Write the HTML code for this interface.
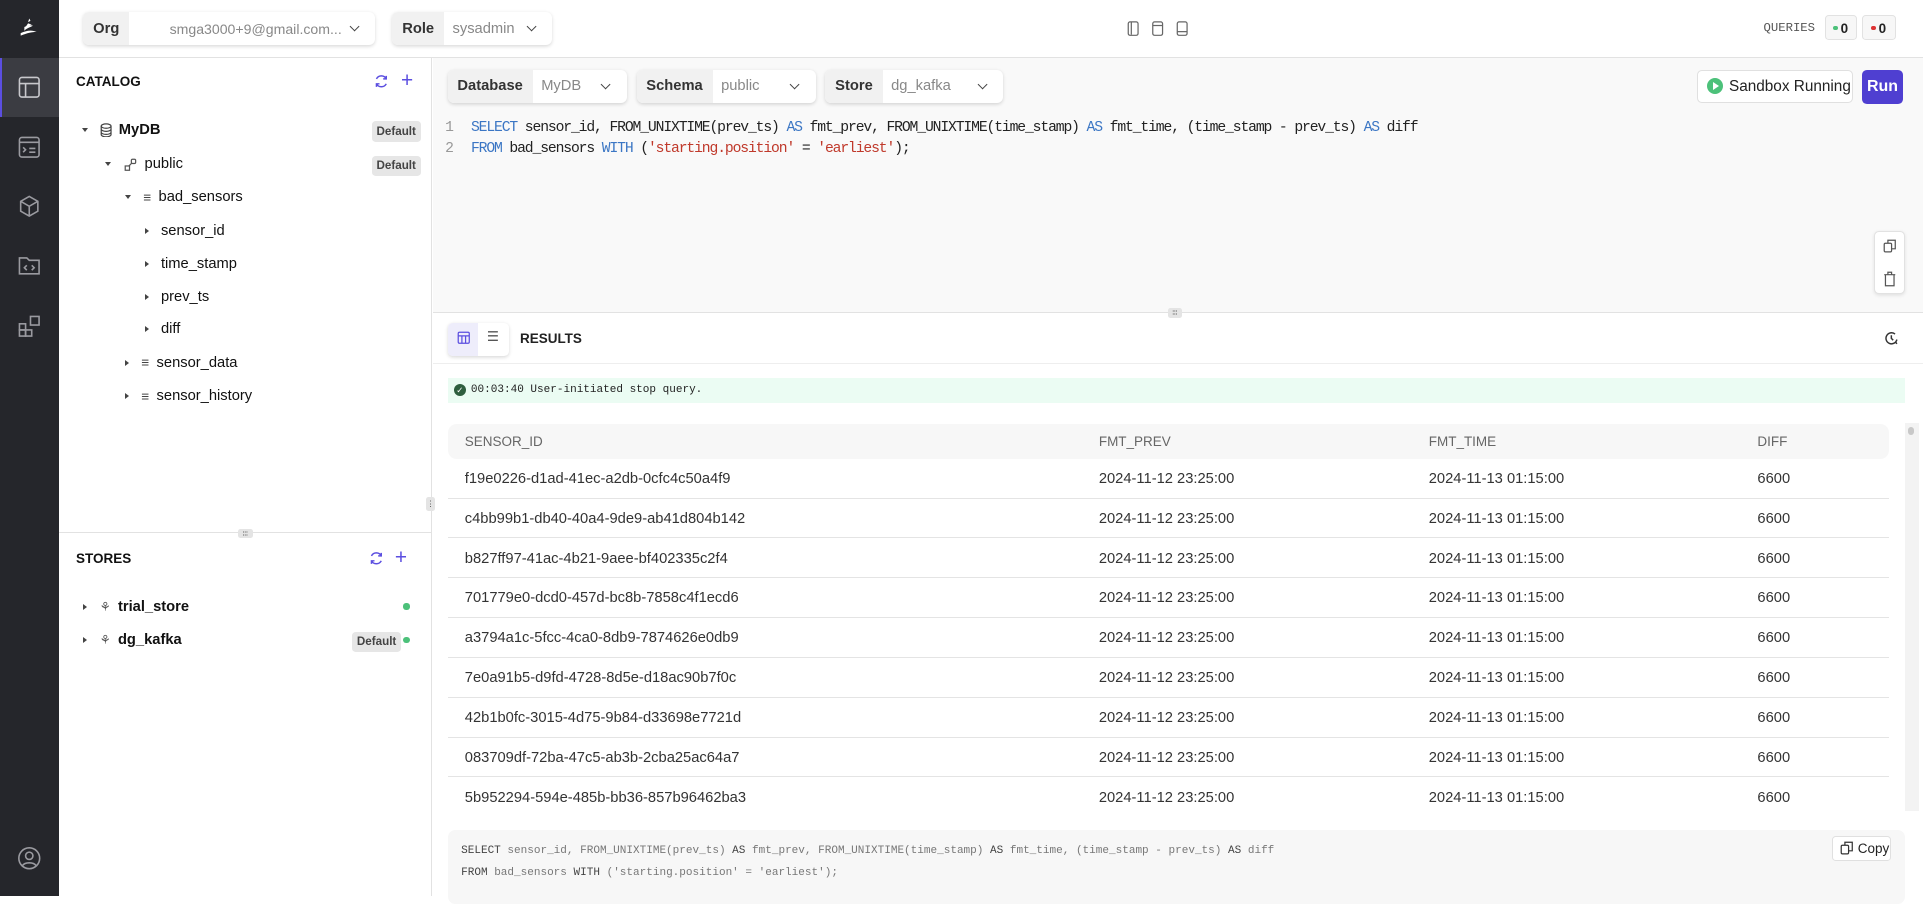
<!DOCTYPE html>
<html><head><meta charset="utf-8">
<style>
html{zoom:1.22640}
*{box-sizing:border-box;margin:0;padding:0}
body{width:1568px;height:731px;overflow:hidden;font-family:"Liberation Sans",sans-serif;font-size:12px;color:#222;background:#fff;position:relative}
.abs{position:absolute}
.mono{font-family:"Liberation Mono",monospace}
.side{left:0;top:0;width:48px;height:731px;background:#25262b}
.side svg{position:absolute;left:14px}
.top{left:48px;top:0;right:0;height:47px;border-bottom:1px solid #e2e2e2;background:#fff}
.sel{position:absolute;height:27px;border-radius:5px;box-shadow:0 1px 3px rgba(0,0,0,.15);display:flex;background:#fff;overflow:hidden}
.sel .l{background:#f1f1f1;padding:0 8px;display:flex;align-items:center;font-weight:bold;color:#333;font-size:12px}
.sel .v{flex:1;display:flex;align-items:center;padding-left:7px;color:#888;font-size:12px;position:relative}
.sel .v:after{content:"";position:absolute;right:14px;top:9px;width:5px;height:5px;border-right:1.2px solid #444;border-bottom:1.2px solid #444;transform:rotate(45deg)}
.left{left:48px;top:47px;width:304px;height:684px;border-right:1px solid #e2e2e2;background:#fff}
.hdr{font-weight:bold;font-size:11px;color:#111}
.row{position:absolute;font-size:12px;color:#111;display:flex;align-items:center;height:16px}
.tri{width:0;height:0;border-left:3.5px solid #444;border-top:3px solid transparent;border-bottom:3px solid transparent;margin-right:10px}
.tri.d{border-top:3.5px solid #444;border-left:3px solid transparent;border-right:3px solid transparent;border-bottom:0}
.badge{position:absolute;background:#e6e6e6;border-radius:3px;font-size:9.5px;font-weight:bold;color:#444;padding:3px 4px}
.handle{position:absolute;width:12px;height:8px;background:#e4e4e4;border-radius:2px;font-size:6px;line-height:8px;text-align:center;color:#444}
.kw{color:#3b76c4}.str{color:#c0392b}
.tbl{position:absolute;left:365px;width:1175px}
.tr{height:32.5px;border-bottom:1px solid #e4e4e4;position:relative;font-size:12px;color:#333}
.tr span{position:absolute;top:10px}
</style></head><body>

<div class="abs side">
  <svg style="top:13px" width="20" height="20" viewBox="0 0 20 20"><path d="M10 2l1 2-2 1zM6 9c2-1 5-2 7-1-2 1-5 2-7 4zM3 14c4-2 9-3 13-1-3 0-8 1-13 3z" fill="#fff"/><path d="M9 6c1 0 2 1 3 1l-5 2z" fill="#fff"/></svg>
  <div class="abs" style="left:0;top:47px;width:48px;height:48px;background:#3b3c42;border-left:2px solid #5b4ee0"></div>
  <svg style="top:61px" width="20" height="20" viewBox="0 0 20 20" fill="none" stroke="#c8c8cc" stroke-width="1.3"><rect x="2" y="2" width="16" height="16" rx="2"/><path d="M2 7h16M7 7v11"/></svg>
  <svg style="top:110px" width="20" height="20" viewBox="0 0 20 20" fill="none" stroke="#9a9aa0" stroke-width="1.3"><rect x="2" y="2" width="16" height="16" rx="2"/><path d="M2 6h16M5 10l2 2-2 2M10 11h5M10 14h5"/></svg>
  <svg style="top:158px" width="20" height="20" viewBox="0 0 20 20" fill="none" stroke="#9a9aa0" stroke-width="1.3"><path d="M10 2l7 4v8l-7 4-7-4V6zM3 6l7 4 7-4M10 10v8"/></svg>
  <svg style="top:206px" width="20" height="20" viewBox="0 0 20 20" fill="none" stroke="#9a9aa0" stroke-width="1.3"><path d="M2 4h6l2 2h8v11H2z"/><path d="M8 10l-2 2 2 2M12 10l2 2-2 2"/></svg>
  <svg style="top:256px" width="20" height="20" viewBox="0 0 20 20" fill="none" stroke="#9a9aa0" stroke-width="1.3"><rect x="2" y="8" width="5" height="5"/><rect x="2" y="13" width="5" height="5"/><rect x="7" y="13" width="5" height="5"/><rect x="11" y="2" width="7" height="7"/></svg>
  <svg style="top:690px" width="20" height="20" viewBox="0 0 20 20" fill="none" stroke="#9a9aa0" stroke-width="1.3"><circle cx="10" cy="10" r="8.5"/><circle cx="10" cy="8" r="3"/><path d="M4.5 16c2-3 9-3 11 0"/></svg>
</div>

<div class="abs top">
  <div class="sel" style="left:20px;top:10px;width:238px"><div class="l">Org</div><div class="v" style="padding-left:33px;font-size:11.5px">smga3000+9@gmail.com...</div></div>
  <div class="sel" style="left:272px;top:10px;width:130px"><div class="l">Role</div><div class="v">sysadmin</div></div>
  <svg class="abs" style="left:871px;top:16px" width="60" height="14" viewBox="0 0 60 14" fill="none" stroke="#666" stroke-width="1"><rect x="1" y="1.5" width="8" height="11" rx="1.5"/><path d="M3.5 2v10"/><rect x="21" y="1.5" width="8" height="11" rx="1.5"/><path d="M21 4.5h8"/><rect x="41" y="1.5" width="8" height="11" rx="1.5"/><path d="M41 9.5h8"/></svg>
  <div class="abs mono" style="left:1390px;top:17px;font-size:10px;color:#555">QUERIES</div>
  <div class="abs" style="left:1440px;top:12px;width:26px;height:21px;border:1px solid #e2e2e2;border-radius:3px;background:#f7f7f7"><div class="abs" style="left:6px;top:8px;width:4px;height:4px;border-radius:50%;background:#4cc17a"></div><b class="abs" style="left:12px;top:4px;font-size:11px">0</b></div>
  <div class="abs" style="left:1470px;top:12px;width:28px;height:21px;border:1px solid #e2e2e2;border-radius:3px;background:#f7f7f7"><div class="abs" style="left:7px;top:8px;width:4px;height:4px;border-radius:50%;background:#d33"></div><b class="abs" style="left:13px;top:4px;font-size:11px">0</b></div>
</div>

<div class="abs left">
  <div class="abs hdr" style="left:14px;top:13px">CATALOG</div>
  <svg class="abs" style="left:257px;top:13px" width="12" height="12" viewBox="0 0 12 12" fill="none" stroke="#5b4ee0" stroke-width="1.2"><path d="M10 4A4.5 4.5 0 0 0 2 4M2 8a4.5 4.5 0 0 0 8 0M10 1.5V4H7.5M2 10.5V8h2.5"/></svg>
  <div class="abs" style="left:279px;top:9px;color:#5b4ee0;font-size:17px">+</div>

  <div class="row" style="left:19px;top:51px"><div class="tri d"></div><svg width="10" height="12" viewBox="0 0 10 12" fill="none" stroke="#444"><ellipse cx="5" cy="2.5" rx="4" ry="1.8"/><path d="M1 2.5v7c0 1 1.8 1.8 4 1.8s4-.8 4-1.8v-7M1 5c0 1 1.8 1.8 4 1.8S9 6 9 5M1 7.5c0 1 1.8 1.8 4 1.8S9 8.5 9 7.5"/></svg><b style="margin-left:5px">MyDB</b></div>
  <div class="badge" style="left:255px;top:52px">Default</div>
  <div class="row" style="left:38px;top:79px"><div class="tri d"></div><svg width="11" height="11" viewBox="0 0 11 11" fill="none" stroke="#555"><rect x="6" y="1" width="3.5" height="3.5" rx="1"/><rect x="1" y="6.5" width="3.5" height="3.5"/><path d="M6.5 4L4 6.5"/></svg><span style="margin-left:6px">public</span></div>
  <div class="badge" style="left:255px;top:80px">Default</div>
  <div class="row" style="left:54px;top:106px"><div class="tri d"></div><span style="font-size:11px;color:#444">≡</span><span style="margin-left:6px">bad_sensors</span></div>
  <div class="row" style="left:70px;top:133px"><div class="tri"></div>sensor_id</div>
  <div class="row" style="left:70px;top:160px"><div class="tri"></div>time_stamp</div>
  <div class="row" style="left:70px;top:187px"><div class="tri"></div>prev_ts</div>
  <div class="row" style="left:70px;top:213px"><div class="tri"></div>diff</div>
  <div class="row" style="left:54px;top:241px"><div class="tri"></div><span style="font-size:11px;color:#444">≡</span><span style="margin-left:6px">sensor_data</span></div>
  <div class="row" style="left:54px;top:268px"><div class="tri"></div><span style="font-size:11px;color:#444">≡</span><span style="margin-left:6px">sensor_history</span></div>

  <div class="abs" style="left:0;top:387px;width:304px;height:1px;background:#e2e2e2"></div>
  <div class="handle" style="left:146px;top:384px">⦙⦙⦙</div>
  <div class="abs hdr" style="left:14px;top:402px">STORES</div>
  <svg class="abs" style="left:253px;top:402px" width="12" height="12" viewBox="0 0 12 12" fill="none" stroke="#5b4ee0" stroke-width="1.2"><path d="M10 4A4.5 4.5 0 0 0 2 4M2 8a4.5 4.5 0 0 0 8 0M10 1.5V4H7.5M2 10.5V8h2.5"/></svg>
  <div class="abs" style="left:274px;top:398px;color:#5b4ee0;font-size:17px">+</div>
  <div class="row" style="left:20px;top:440px"><div class="tri"></div><span style="font-size:10px;color:#555">⚘</span><b style="margin-left:6px">trial_store</b></div>
  <div class="abs" style="left:281px;top:445px;width:5px;height:5px;border-radius:50%;background:#4cc17a"></div>
  <div class="row" style="left:20px;top:467px"><div class="tri"></div><span style="font-size:10px;color:#555">⚘</span><b style="margin-left:6px">dg_kafka</b></div>
  <div class="badge" style="left:239px;top:468px">Default</div>
  <div class="abs" style="left:281px;top:472px;width:5px;height:5px;border-radius:50%;background:#4cc17a"></div>
</div>
<div class="handle" style="left:347px;top:405px;width:8px;height:12px;line-height:12px">⋮</div>

<div class="abs" style="left:353px;top:47px;right:0;height:208px;background:#f9f9f9;border-bottom:1px solid #e2e2e2"></div>
<div class="sel" style="left:365px;top:57px;width:146px"><div class="l">Database</div><div class="v">MyDB</div></div>
<div class="sel" style="left:519px;top:57px;width:146px"><div class="l">Schema</div><div class="v">public</div></div>
<div class="sel" style="left:673px;top:57px;width:145px"><div class="l">Store</div><div class="v">dg_kafka</div></div>
<div class="abs" style="left:1384px;top:57px;width:127px;height:27px;border:1px solid #e0e0e0;border-radius:4px;background:#fff;font-size:12.5px;padding:6px 0 0 25px;white-space:nowrap">Sandbox Running</div>
<div class="abs" style="left:1392px;top:64px;width:13px;height:13px;border-radius:50%;background:#4cc17a"></div>
<div class="abs" style="left:1397px;top:67px;width:0;height:0;border-left:5px solid #fff;border-top:3.5px solid transparent;border-bottom:3.5px solid transparent"></div>
<div class="abs" style="left:1518px;top:57px;width:34px;height:28px;border-radius:4px;background:#4f3fd1;color:#fff;font-weight:bold;font-size:13px;text-align:center;line-height:28px">Run</div>

<div class="abs mono" style="left:363px;top:96px;font-size:12px;line-height:17px;color:#999">1<br>2</div>
<div class="abs mono" style="left:384px;top:96px;font-size:12px;letter-spacing:-0.92px;line-height:17px;color:#222;white-space:pre"><span class="kw">SELECT</span> sensor_id, FROM_UNIXTIME(prev_ts) <span class="kw">AS</span> fmt_prev, FROM_UNIXTIME(time_stamp) <span class="kw">AS</span> fmt_time, (time_stamp - prev_ts) <span class="kw">AS</span> diff
<span class="kw">FROM</span> bad_sensors <span class="kw">WITH</span> (<span class="str">'starting.position'</span> = <span class="str">'earliest'</span>);</div>

<div class="abs" style="left:1528px;top:188px;width:25px;height:52px;background:#fff;border:1px solid #e2e2e2;border-radius:4px;box-shadow:0 1px 3px rgba(0,0,0,.1)"></div>
<svg class="abs" style="left:1535px;top:195px" width="11" height="11" viewBox="0 0 11 11" fill="none" stroke="#555"><rect x="1" y="3.5" width="6" height="7" rx="1"/><path d="M4 3.5V1h6v7H7"/></svg>
<svg class="abs" style="left:1535px;top:221px" width="11" height="13" viewBox="0 0 11 13" fill="none" stroke="#555"><path d="M2 3h7v9H2zM1 3h9M4 3V1h3v2"/></svg>
<div class="handle" style="left:952px;top:251px">⦙⦙⦙</div>

<div class="abs" style="left:365px;top:263px;width:50px;height:27px;border-radius:4px;box-shadow:0 1px 3px rgba(0,0,0,.15);background:#fff;overflow:hidden"><div style="width:25px;height:27px;background:#eeedfb"></div></div>
<svg class="abs" style="left:373px;top:270px" width="11" height="11" viewBox="0 0 11 11" fill="none" stroke="#5b4ee0"><rect x="1" y="1" width="9" height="9" rx="1"/><path d="M1 4h9M4 4v6M7 4v6"/></svg>
<div class="abs" style="left:397px;top:268px;font-size:11px;color:#555">☰</div>
<div class="abs" style="left:424px;top:270px;font-weight:bold;font-size:11px">RESULTS</div>
<svg class="abs" style="left:1536px;top:270px" width="12" height="12" viewBox="0 0 12 12" fill="none" stroke="#333" stroke-width="1.2"><path d="M10.5 7A4.5 4.5 0 1 1 9 2.5M6 3.5V6l1.5 1.5M9.5 9l1 1.5"/></svg>
<div class="abs" style="left:353px;top:296px;right:0;height:1px;background:#eee"></div>

<div class="abs mono" style="left:365px;top:308px;width:1188px;height:21px;background:#ebfcf3;font-size:9px;padding:5px 0 0 19px;color:#222">00:03:40 User-initiated stop query.</div>
<div class="abs" style="left:370px;top:313px;width:10px;height:10px;border-radius:50%;background:#2e5e3e;color:#fff;font-size:7px;text-align:center;line-height:10px">✓</div>

<div class="tbl" style="top:346px">
  <div style="height:28px;background:#f7f7f7;border-radius:7px;position:relative;font-size:11px;color:#666"><span class="abs" style="left:14px;top:8px">SENSOR_ID</span><span class="abs" style="left:531px;top:8px">FMT_PREV</span><span class="abs" style="left:800px;top:8px">FMT_TIME</span><span class="abs" style="left:1068px;top:8px">DIFF</span></div>
  <div class="tr"><span style="left:14px">f19e0226-d1ad-41ec-a2db-0cfc4c50a4f9</span><span style="left:531px">2024-11-12 23:25:00</span><span style="left:800px">2024-11-13 01:15:00</span><span style="left:1068px">6600</span></div>
  <div class="tr"><span style="left:14px">c4bb99b1-db40-40a4-9de9-ab41d804b142</span><span style="left:531px">2024-11-12 23:25:00</span><span style="left:800px">2024-11-13 01:15:00</span><span style="left:1068px">6600</span></div>
  <div class="tr"><span style="left:14px">b827ff97-41ac-4b21-9aee-bf402335c2f4</span><span style="left:531px">2024-11-12 23:25:00</span><span style="left:800px">2024-11-13 01:15:00</span><span style="left:1068px">6600</span></div>
  <div class="tr"><span style="left:14px">701779e0-dcd0-457d-bc8b-7858c4f1ecd6</span><span style="left:531px">2024-11-12 23:25:00</span><span style="left:800px">2024-11-13 01:15:00</span><span style="left:1068px">6600</span></div>
  <div class="tr"><span style="left:14px">a3794a1c-5fcc-4ca0-8db9-7874626e0db9</span><span style="left:531px">2024-11-12 23:25:00</span><span style="left:800px">2024-11-13 01:15:00</span><span style="left:1068px">6600</span></div>
  <div class="tr"><span style="left:14px">7e0a91b5-d9fd-4728-8d5e-d18ac90b7f0c</span><span style="left:531px">2024-11-12 23:25:00</span><span style="left:800px">2024-11-13 01:15:00</span><span style="left:1068px">6600</span></div>
  <div class="tr"><span style="left:14px">42b1b0fc-3015-4d75-9b84-d33698e7721d</span><span style="left:531px">2024-11-12 23:25:00</span><span style="left:800px">2024-11-13 01:15:00</span><span style="left:1068px">6600</span></div>
  <div class="tr"><span style="left:14px">083709df-72ba-47c5-ab3b-2cba25ac64a7</span><span style="left:531px">2024-11-12 23:25:00</span><span style="left:800px">2024-11-13 01:15:00</span><span style="left:1068px">6600</span></div>
  <div class="tr" style="border-bottom:0"><span style="left:14px">5b952294-594e-485b-bb36-857b96462ba3</span><span style="left:531px">2024-11-12 23:25:00</span><span style="left:800px">2024-11-13 01:15:00</span><span style="left:1068px">6600</span></div>
</div>
<div class="abs" style="left:1553px;top:345px;width:12px;height:316px;background:#f3f3f3"></div>
<div class="abs" style="left:1556px;top:348px;width:5px;height:7px;border-radius:3px;background:#c8c8c8"></div>

<div class="abs" style="left:365px;top:677px;width:1188px;height:60px;background:#f7f7f7;border-radius:6px"></div>
<div class="abs mono" style="left:376px;top:685px;font-size:9px;line-height:18px;color:#777;white-space:pre"><span style="color:#444">SELECT</span> sensor_id, FROM_UNIXTIME(prev_ts) <span style="color:#444">AS</span> fmt_prev, FROM_UNIXTIME(time_stamp) <span style="color:#444">AS</span> fmt_time, (time_stamp - prev_ts) <span style="color:#444">AS</span> diff
<span style="color:#444">FROM</span> bad_sensors <span style="color:#444">WITH</span> ('starting.position' = 'earliest');</div>
<div class="abs" style="left:1494px;top:682px;width:48px;height:20px;background:#fff;border:1px solid #e0e0e0;border-radius:3px;font-size:11px;padding:3px 0 0 20px">Copy</div>
<svg class="abs" style="left:1500px;top:686px" width="11" height="11" viewBox="0 0 11 11" fill="none" stroke="#333"><rect x="1" y="3.5" width="6" height="7" rx="1"/><path d="M4 3.5V1h6v7H7"/></svg>
</body></html>
